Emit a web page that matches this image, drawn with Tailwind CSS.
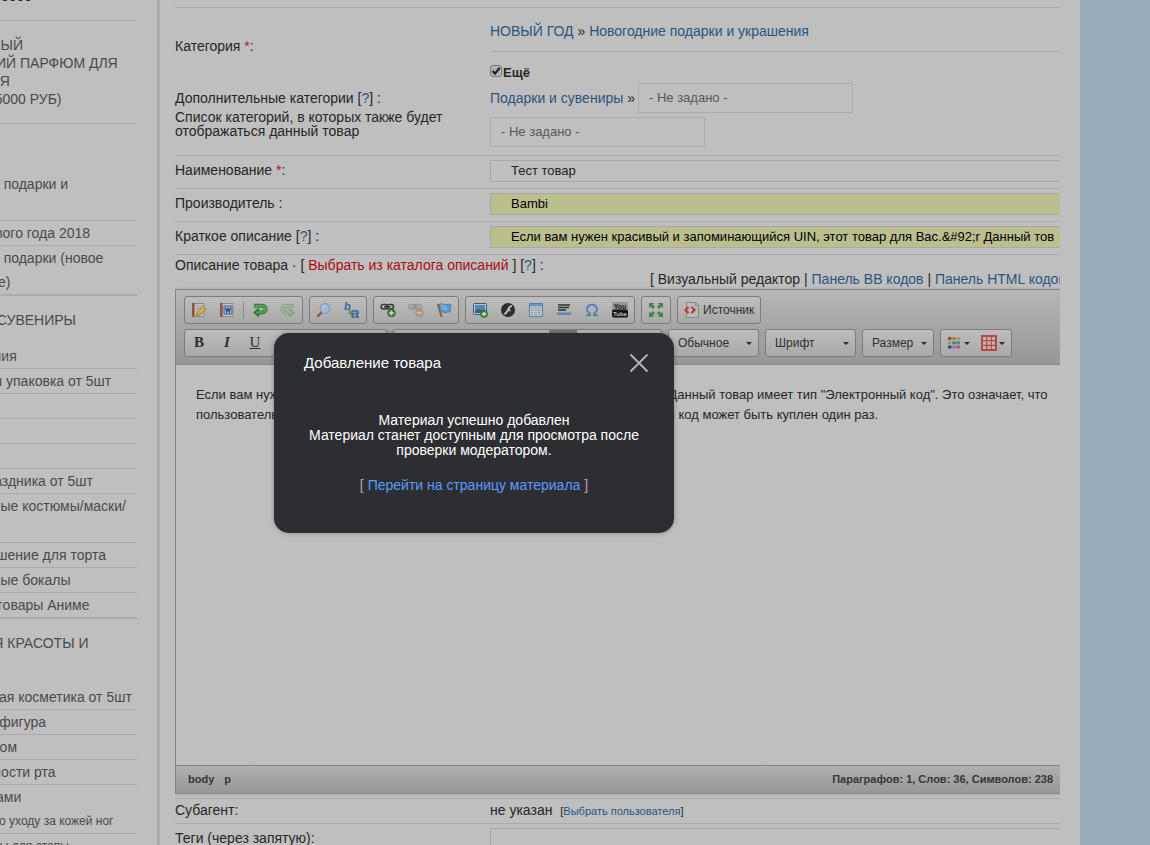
<!DOCTYPE html>
<html lang="ru">
  <head>
    <meta charset="UTF-8" />
    <meta name="viewport" content="width=device-width, initial-scale=1.0" />
    <title>Добавление товара</title>
    <script src="https://cdn.jsdelivr.net/npm/@tailwindcss/browser@4"></script>
  </head>
  <body class="h-screen overflow-hidden bg-[#99aebd] font-['Liberation_Sans',Arial,sans-serif] text-sm text-[#262626]">
    <div class="mr-[70px] flex h-full overflow-hidden bg-[#bfbfbf]">
      <!-- Left menu -->
      <aside class="w-[160px] shrink-0 overflow-hidden border-r-3 border-[#acacac] pr-5 text-[#4a4a4a]">
        <nav class="-mt-[13px] -ml-[88px] whitespace-nowrap">
          <h3 class="border-b border-[#acacac] pb-[15px] leading-[18px] font-bold text-[#232323]">ТОВАРЫ ОТ 5000</h3>
          <h3 class="border-b border-[#acacac] py-[15px] leading-[18px]">
            ПРЕМИАЛЬНЫЙ<br />ФРАНЦУЗСКИЙ ПАРФЮМ ДЛЯ<br />ДОМА И СЕБЯ<br />(МИНИМУМ 5000 РУБ)
          </h3>
          <h3 class="py-[15px] leading-[18px]">&nbsp;</h3>
          <ul class="ml-[11px] border-b-2 border-[#acacac] leading-6">
            <li class="border-b border-[#acacac]"><a href="#">Новогодние подарки и<br />&nbsp;</a></li>
            <li class="border-b border-[#acacac]"><a href="#">Символ Нового года 2018</a></li>
            <li><a href="#">Новогодние подарки (новое<br />поступление)</a></li>
          </ul>
          <h3 class="py-[15px] leading-[18px]">ПОДАРКИ И СУВЕНИРЫ</h3>
          <ul class="ml-[11px] border-b-2 border-[#acacac] leading-6">
            <li class="border-b border-[#acacac]"><a href="#">Поздравления</a></li>
            <li class="border-b border-[#acacac]"><a href="#">Подарочная упаковка от 5шт</a></li>
            <li class="border-b border-[#acacac]"><a href="#">Игрушки</a></li>
            <li class="border-b border-[#acacac]"><a href="#">Магниты</a></li>
            <li class="border-b border-[#acacac]"><a href="#">Свечи</a></li>
            <li class="border-b border-[#acacac]"><a href="#">Все для праздника от 5шт</a></li>
            <li class="border-b border-[#acacac]"><a href="#">Карнавальные костюмы/маски/<br />парики</a></li>
            <li class="border-b border-[#acacac]"><a href="#">Новое украшение для торта</a></li>
            <li class="border-b border-[#acacac]"><a href="#">Карнавальные бокалы</a></li>
            <li><a href="#">Сувениры, товары Аниме</a></li>
          </ul>
          <h3 class="py-[15px] leading-[18px]">ТОВАРЫ ДЛЯ КРАСОТЫ И<br />ЗДОРОВЬЯ</h3>
          <ul class="ml-[11px] leading-6">
            <li class="border-b border-[#acacac]"><a href="#">Декоративная косметика от 5шт</a></li>
            <li class="border-b border-[#acacac]"><a href="#">Идеальная фигура</a></li>
            <li class="border-b border-[#acacac]"><a href="#">Уход за лицом</a></li>
            <li class="border-b border-[#acacac]"><a href="#">Гигиена полости рта</a></li>
            <li><a href="#">Уход за ногами</a></li>
            <li class="border-b border-[#acacac] text-xs leading-6"><a href="#">Инструмент по уходу за кожей ног</a></li>
            <li class="text-xs leading-6"><a href="#">Эл. массажеры для стопы</a></li>
          </ul>
        </nav>
      </aside>

      <!-- Form -->
      <main class="mr-5 ml-[15px] min-w-0 flex-1 overflow-hidden pt-[7px]">
        <form>
          <div class="grid grid-cols-[315px_1fr] border-y border-[#acacac]">
            <div class="pt-[29px]">
              <p class="leading-[18px]">Категория <span class="text-[#b3101c]">*</span>:</p>
              <p class="mt-[34px] leading-[18px]">Дополнительные категории [<a href="#" class="text-[#2b547d]">?</a>] :</p>
              <p class="mt-[3px] w-[280px] leading-[14px]">Список категорий, в которых также будет отображаться данный товар</p>
            </div>
            <div class="pb-2">
              <p class="border-b border-[#acacac] pt-[14px] pb-[11px] leading-[18px]">
                <a href="#" class="text-[#2b547d]">НОВЫЙ ГОД</a> »
                <a href="#" class="text-[#2b547d]">Новогодние подарки и украшения</a>
              </p>
              <label class="relative mt-3 flex h-[18px] gap-px text-[13px] leading-[18px] font-bold">
                <input type="checkbox" checked class="mt-px size-3 appearance-none rounded-[3px] border border-[#777] bg-[#b4b4b4]" />
                <svg class="absolute top-px left-0 size-3" viewBox="0 0 12 12" fill="none" stroke="#222" stroke-width="2.2"><path d="M2.5 6 5 8.6 9.6 2.8" /></svg>
                Ещё
              </label>
              <div class="mt-px flex items-center gap-[3px]">
                <span><a href="#" class="text-[#2b547d]">Подарки и сувениры</a> »</span>
                <select aria-label="Подкатегория" class="h-[30px] w-[215px] appearance-none border border-[#acacac] px-[10px] text-[13px] text-[#585858]">
                  <option>- Не задано -</option>
                </select>
              </div>
              <select aria-label="Категория" class="mt-1 block h-[30px] w-[215px] appearance-none border border-[#acacac] px-[10px] text-[13px] text-[#585858]">
                <option>- Не задано -</option>
              </select>
            </div>
          </div>

          <div class="grid grid-cols-[315px_1fr] border-b border-[#acacac] pt-1 pb-[6px]">
            <label for="name" class="leading-5">Наименование <span class="text-[#b3101c]">*</span>:</label>
            <input id="name" type="text" value="Тест товар" class="h-[22px] w-full border border-r-0 border-[#a9a9a9] pb-[2px] pl-5 text-[13px] text-[#232323]" />
          </div>
          <div class="grid grid-cols-[315px_1fr] border-b border-[#acacac] pt-1 pb-[6px]">
            <label for="vendor" class="leading-5">Производитель :</label>
            <input id="vendor" type="text" value="Bambi" class="h-[22px] w-full border border-r-0 border-[#a9a9a9] bg-[#bbbf8d] pb-[2px] pl-5 text-[13px] text-black" />
          </div>
          <div class="grid grid-cols-[315px_1fr] border-b border-[#acacac] pt-1 pb-[6px]">
            <label for="brief" class="leading-5">Краткое описание [<a href="#" class="text-[#2b547d]">?</a>] :</label>
            <input
              id="brief"
              type="text"
              value="Если вам нужен красивый и запоминающийся UIN, этот товар для Вас.&amp;#92;r Данный тов"
              class="h-[22px] w-full border border-r-0 border-[#a9a9a9] bg-[#bbbf8d] pb-[2px] pl-5 text-[13px] text-black"
            />
          </div>

          <div class="flex h-[34px] leading-5 whitespace-nowrap">
            <p class="w-[475px] shrink-0">
              Описание товара · [ <a href="#" class="text-[#a80c18]">Выбрать из каталога описаний</a> ] [<a href="#" class="text-[#2b547d]">?</a>] :
            </p>
            <p class="self-end">
              [ Визуальный редактор | <a href="#" class="text-[#2b547d]">Панель BB кодов</a> |
              <a href="#" class="text-[#2b547d]">Панель HTML кодов</a> ]
            </p>
          </div>

          <!-- Editor -->
          <div class="border border-r-0 border-[#858585] shadow-[0_0_3px_rgba(0,0,0,0.15)]">
            <div class="flex flex-col gap-[5px] border-b border-[#858585] bg-linear-to-b from-[#b6b6b6] to-[#979797] pt-[6px] pb-[7px] pl-2 text-xs text-[#303030]">
              <div class="flex gap-[6px]">
                <div class="flex h-7 items-center rounded-[3px] border border-[#7c7c7c] bg-linear-to-b from-[#bdbdbd] to-[#a9a9a9]">
                  <button type="button" aria-label="Шаблоны" class="px-[6px]">
                    <svg class="size-4" viewBox="0 0 16 16"><path d="M3 1.500h10v13H3z" fill="#c3c3c3" stroke="#8c8c8c" /><path d="M5 4h7M5 6.500h7M5 9h4M5 11.500h4" stroke="#8e949c" /><path d="M1 1h2.500v14H1z" fill="#95553c" /><path d="m5.500 14 .8-4L12 4.800l3 2.400-5.500 5.600z" fill="#d9a236" stroke="#92681e" stroke-width=".7" /><path d="m7 11 5.500-5" stroke="#ecd08a" /></svg>
                  </button>
                  <button type="button" aria-label="Вставить из Word" class="px-[6px]">
                    <svg class="size-4" viewBox="0 0 16 16"><path d="M3 1.500h11v13H3z" fill="#c3c3c3" stroke="#8c8c8c" /><path d="M1 1h2.500v14H1z" fill="#95553c" /><path d="M5 4h8v8H5z" fill="#b1bccd" stroke="#416398" /><path d="m6.500 5.500 1.200 4.500L9 6.500l1.300 3.500 1.200-4.500" fill="none" stroke="#2c4d8b" stroke-width="1.300" /></svg>
                  </button>
                  <span class="mx-[2px] h-[18px] w-px bg-[#8c8c8c]"></span>
                  <button type="button" aria-label="Отменить" class="px-[6px]">
                    <svg class="size-4" viewBox="0 0 16 16"><path d="M2 3.800h8.300a3.200 3.200 0 0 1 0 6.600H6" fill="none" stroke="#2f7532" stroke-width="4" /><path d="M7 5.500v10L1 10.400z" fill="#2f7532" /><path d="M2.500 3.800h7.800a3.200 3.200 0 0 1 0 6.600H4" fill="none" stroke="#56a351" stroke-width="2.200" /></svg>
                  </button>
                  <button type="button" aria-label="Повторить" class="px-[6px] opacity-35">
                    <svg class="size-4 -scale-x-100" viewBox="0 0 16 16"><path d="M2 3.800h8.300a3.200 3.200 0 0 1 0 6.600H6" fill="none" stroke="#397d3c" stroke-width="4" /><path d="M7 5.500v10L1 10.400z" fill="#397d3c" /><path d="M2.500 3.800h7.800a3.200 3.200 0 0 1 0 6.600H4" fill="none" stroke="#75b172" stroke-width="2.200" /></svg>
                  </button>
                </div>
                <div class="flex h-7 items-center rounded-[3px] border border-[#7c7c7c] bg-linear-to-b from-[#bdbdbd] to-[#a9a9a9]">
                  <button type="button" aria-label="Найти" class="px-[6px]">
                    <svg class="size-4" viewBox="0 0 16 16"><path d="m6 10-4 4" stroke="#90562c" stroke-width="2.400" stroke-linecap="round" /><circle cx="9" cy="6.500" r="4.800" fill="#a1bad8" stroke="#7f9cc4" stroke-width="1.200" /><path d="M6.500 6a2.500 2.500 0 0 1 3-2" fill="none" stroke="#c5d3e3" stroke-width="1.300" /></svg>
                  </button>
                  <button type="button" aria-label="Заменить" class="px-[6px]">
                    <svg class="size-4 overflow-visible" viewBox="0 0 16 16" font-family="Liberation Sans, sans-serif" font-weight="bold" font-style="italic" fill="#2f67b0"><text x="0" y="8" font-size="11">b</text><text x="7" y="16" font-size="15">a</text><path d="m4 7 4 4M8.500 7.500v4h-4" fill="none" stroke="#459044" stroke-width="1.500" /></svg>
                  </button>
                </div>
                <div class="flex h-7 items-center rounded-[3px] border border-[#7c7c7c] bg-linear-to-b from-[#bdbdbd] to-[#a9a9a9]">
                  <button type="button" aria-label="Ссылка" class="px-[6px]">
                    <svg class="size-4" viewBox="0 0 16 16"><g fill="none" stroke="#383838" stroke-width="1.500"><rect x="1" y="2.500" width="6.500" height="4.500" rx="2.200" /><rect x="7" y="2.500" width="6.500" height="4.500" rx="2.200" /><path d="M4 4.800h6.500" /></g><circle cx="11.500" cy="11" r="3.800" fill="#40833a" stroke="#2b6528" /><path d="M9 11h5M11.500 8.500v5" stroke="#c4d8c0" stroke-width="1.400" /></svg>
                  </button>
                  <button type="button" aria-label="Убрать ссылку" class="px-[6px] opacity-35">
                    <svg class="size-4" viewBox="0 0 16 16"><g fill="none" stroke="#555" stroke-width="1.500"><rect x="1" y="2.500" width="6.500" height="4.500" rx="2.200" /><rect x="7" y="2.500" width="6.500" height="4.500" rx="2.200" /><path d="M4 4.800h6.500" /></g><circle cx="11.500" cy="11" r="3.800" fill="#c56038" stroke="#aa4d28" /><path d="M9 11h5" stroke="#eee" stroke-width="1.400" /></svg>
                  </button>
                  <button type="button" aria-label="Якорь" class="px-[6px]">
                    <svg class="size-4" viewBox="0 0 16 16"><path d="m2 2 3.500 13" stroke="#9a5f2e" stroke-width="2" /><path d="M3 2.500c3-2 4.500.8 7 .3s3-.8 5-.3l-1 7.500c-2.500-.8-3 1-5 .8S6 9 4.800 10z" fill="#5b9dd0" stroke="#3c76ac" stroke-width=".8" /><path d="M5 4c2-.8 3 .8 5 .6M6 6.500c2-.6 3 .6 5 .4" fill="none" stroke="#9cc3e0" /></svg>
                  </button>
                </div>
                <div class="flex h-7 items-center rounded-[3px] border border-[#7c7c7c] bg-linear-to-b from-[#bdbdbd] to-[#a9a9a9]">
                  <button type="button" aria-label="Изображение" class="px-[6px]">
                    <svg class="size-4" viewBox="0 0 16 16"><rect x="1.500" y="1.500" width="13" height="11" rx=".8" fill="#bbc4cb" stroke="#355d86" /><path d="M3 3h10v5H3z" fill="#5289bb" /><path d="M3 8.500c4-3 6 .5 10-1V11H3z" fill="#3c6278" /><circle cx="12" cy="12" r="3.500" fill="#4a8a42" stroke="#33682e" stroke-width=".8" /><path d="M10 12h4M12 10v4" stroke="#d0ddcc" stroke-width="1.300" /></svg>
                  </button>
                  <button type="button" aria-label="Flash" class="px-[6px]">
                    <svg class="size-4" viewBox="0 0 16 16"><circle cx="8" cy="8" r="7" fill="#2e2e2e" /><path d="M12 3.800C7.500 4 8.500 11 4.300 12M7.500 8.300h3" fill="none" stroke="#c2c2c2" stroke-width="1.800" /></svg>
                  </button>
                  <button type="button" aria-label="Таблица" class="px-[6px]">
                    <svg class="size-4" viewBox="0 0 16 16"><rect x="1.500" y="1.500" width="13" height="13" fill="#c1c5c9" stroke="#577fb0" /><path d="M2 2h12v2.500H2z" fill="#6d98c6" /><path d="M3 6.500h10M3 8.500h10M3 10.500h10M3 12.500h10" stroke="#8c9c8b" stroke-dasharray="2.500 1" /><path d="M5.700 5v9" stroke="#c1c5c9" /></svg>
                  </button>
                  <button type="button" aria-label="Горизонтальная линия" class="px-[6px]">
                    <svg class="size-4" viewBox="0 0 16 16"><path d="M2 3h12M2 5.500h11M2 8h8" stroke="#2d2d2d" stroke-width="1.300" /><path d="M1 10.500h14v2.500H1z" fill="#6286b5" /></svg>
                  </button>
                  <button type="button" aria-label="Специальный символ" class="px-[6px]">
                    <svg class="size-4" viewBox="0 0 16 16"><path d="M2 13.300h4v-1.800C1 8.500 2.800 2.700 8 2.700s7 5.800 2 8.800v1.800h4" fill="none" stroke="#5380b8" stroke-width="1.900" /></svg>
                  </button>
                  <button type="button" aria-label="Видео YouTube" class="px-[6px]">
                    <svg class="size-4" viewBox="0 0 16 16" font-family="Liberation Sans, sans-serif" font-weight="bold" text-anchor="middle"><rect width="16" height="16" rx="1.500" fill="#969696" /><rect y="7.500" width="16" height="8" rx="2" fill="#151515" /><text x="8" y="6.500" font-size="7" fill="#151515">You</text><text x="8" y="14" font-size="6" fill="#bfbfbf">Tube</text></svg>
                  </button>
                </div>
                <div class="flex h-7 items-center rounded-[3px] border border-[#7c7c7c] bg-linear-to-b from-[#bdbdbd] to-[#a9a9a9]">
                  <button type="button" aria-label="Развернуть" class="px-[6px]">
                    <svg class="size-4" viewBox="0 0 16 16" fill="#438546"><path d="M1 1h5L4.800 2.600 7 5 5 7 2.600 4.800 1 6zM15 1v5l-1.600-1.200L11 7 9 5l2.200-2.400L10 1zM1 15v-5l1.600 1.200L5 9l2 2-2.200 2.400L6 15zM15 15h-5l1.200-1.600L9 11l2-2 2.400 2.200L15 10z" /></svg>
                  </button>
                </div>
                <button type="button" class="flex h-7 w-[84px] items-center gap-[3px] rounded-[3px] border border-[#7c7c7c] bg-linear-to-b from-[#bdbdbd] to-[#a9a9a9] pl-[6px]">
                  <svg class="size-4 shrink-0" viewBox="0 0 16 16"><path d="M2.500.5h9l3 3v12h-12z" fill="#bababa" stroke="#888" /><path d="M11.500.5v3h3" fill="none" stroke="#888" /><path d="M4.500 5 1.500 8l3 3M7.500 5l3 3-3 3" fill="none" stroke="#b03a34" stroke-width="2.200" /></svg>
                  Источник
                </button>
              </div>

              <div class="flex gap-[6px]">
                <div class="flex h-7 w-[203px] items-center rounded-[3px] border border-[#7c7c7c] bg-linear-to-b from-[#bdbdbd] to-[#a9a9a9] font-['Liberation_Serif',serif] text-[15px]">
                  <button type="button" aria-label="Полужирный" class="w-7 font-bold">B</button>
                  <button type="button" aria-label="Курсив" class="w-7 font-bold italic">I</button>
                  <button type="button" aria-label="Подчеркнутый" class="w-7 underline">U</button>
                </div>
                <div class="flex h-7 w-[269px] rounded-[3px] border border-[#7c7c7c] bg-linear-to-b from-[#bdbdbd] to-[#a9a9a9] pl-[155px]">
                  <button type="button" aria-label="По ширине" class="w-7 bg-[#7b7b7b]"></button>
                </div>
                <button type="button" class="flex h-7 w-[91px] items-center justify-between rounded-[3px] border border-[#7c7c7c] bg-linear-to-b from-[#bdbdbd] to-[#a9a9a9] pr-[6px] pl-[9px]">
                  Обычное
                  <svg class="h-[3px] w-[6px]" viewBox="0 0 6 3"><path d="M0 0h6L3 3z" fill="#2b2b2b" /></svg>
                </button>
                <button type="button" class="flex h-7 w-[91px] items-center justify-between rounded-[3px] border border-[#7c7c7c] bg-linear-to-b from-[#bdbdbd] to-[#a9a9a9] pr-[6px] pl-[9px]">
                  Шрифт
                  <svg class="h-[3px] w-[6px]" viewBox="0 0 6 3"><path d="M0 0h6L3 3z" fill="#2b2b2b" /></svg>
                </button>
                <button type="button" class="flex h-7 w-[72px] items-center justify-between rounded-[3px] border border-[#7c7c7c] bg-linear-to-b from-[#bdbdbd] to-[#a9a9a9] pr-[6px] pl-[9px]">
                  Размер
                  <svg class="h-[3px] w-[6px]" viewBox="0 0 6 3"><path d="M0 0h6L3 3z" fill="#2b2b2b" /></svg>
                </button>
                <div class="flex h-7 w-[72px] items-center rounded-[3px] border border-[#7c7c7c] bg-linear-to-b from-[#bdbdbd] to-[#a9a9a9]">
                  <button type="button" aria-label="Цвет текста" class="flex w-[35px] items-center gap-[2px] pl-[5px]">
                    <svg class="size-4" viewBox="0 0 16 16"><path d="M2 2h3.500v3H2z" fill="#a94442" /><path d="M6.300 2h3.500v3H6.300z" fill="#b9764c" /><path d="M10.500 2H14v3h-3.500z" fill="#b29b45" /><path d="M2 6.300h3.500v3H2z" fill="#86a670" /><path d="M6.300 6.300h3.500v3H6.300z" fill="#3f9148" /><path d="M10.500 6.300H14v3h-3.500z" fill="#4181b4" /><path d="M2 10.500h3.500v3H2z" fill="#2f4b80" /><path d="M6.300 10.500h3.500v3H6.300z" fill="#8b74ad" /><path d="M10.500 10.500H14v3h-3.500z" fill="#b45286" /></svg>
                    <svg class="h-[3px] w-[6px]" viewBox="0 0 6 3"><path d="M0 0h6L3 3z" fill="#2b2b2b" /></svg>
                  </button>
                  <button type="button" aria-label="Таблица" class="flex w-[35px] items-center gap-[2px] pl-[5px]">
                    <svg class="size-4" viewBox="0 0 16 16"><path d="M1 1h14v14H1z" fill="#c0b2b2" stroke="#b34b49" stroke-width="2" /><path d="M5.700 1v14M10.300 1v14M1 5.700h14M1 10.300h14" stroke="#b34b49" stroke-width="1.200" /></svg>
                    <svg class="h-[3px] w-[6px]" viewBox="0 0 6 3"><path d="M0 0h6L3 3z" fill="#2b2b2b" /></svg>
                  </button>
                </div>
              </div>
            </div>
            <div contenteditable="true" aria-label="Описание товара" class="h-[400px] px-5 pt-5 text-[13px] leading-5 whitespace-nowrap">
              <p>
                Если вам нужен красивый и запоминающийся UIN, этот товар для Вас.&amp;#92;r Данный товар имеет тип "Электронный код". Это означает, что<br />
                пользователь после оплаты товара получает персональный код доступа. Один код может быть куплен один раз.
              </p>
            </div>
            <div class="flex h-7 items-center justify-between border-t border-[#858585] bg-linear-to-b from-[#b1b1b1] to-[#979797] pr-[7px] pl-3 text-[11px] font-bold text-[#363636]">
              <span class="flex gap-[10px]"><span>body</span><span>p</span></span>
              <span>Параграфов: 1, Слов: 36, Символов: 238</span>
            </div>
          </div>

          <div class="mt-1 grid grid-cols-[315px_1fr] border-y border-[#acacac] leading-[23px]">
            <span>Субагент:</span>
            <p>не указан <span class="ml-1 text-[11px]">[<a href="#" class="text-[#2b547d]">Выбрать пользователя</a>]</span></p>
          </div>
          <div class="grid grid-cols-[315px_1fr] pt-1">
            <label for="tags" class="leading-5">Теги (через запятую):</label>
            <input id="tags" type="text" class="h-[22px] w-full border border-r-0 border-[#a9a9a9] pl-5 text-[13px]" />
          </div>
        </form>
      </main>
    </div>

    <!-- Result window -->
    <div role="dialog" aria-labelledby="dialogTitle" class="absolute top-[333px] left-[274px] h-[200px] w-[400px] rounded-[15px] bg-[#2d2e32] text-white shadow-[0_0_5px_rgba(0,0,0,0.3)]">
      <div class="flex items-center justify-between pt-5 pr-[25px] pl-[30px]">
        <h2 id="dialogTitle" class="text-[15px] leading-5">Добавление товара</h2>
        <button type="button" aria-label="Закрыть">
          <svg class="size-5" viewBox="0 0 20 20" fill="none" stroke="#b5b6b8" stroke-width="1.800"><path d="m1.500 1.500 17 17M18.500 1.500l-17 17" /></svg>
        </button>
      </div>
      <div class="px-5 pt-10 text-center leading-[15px]">
        <p>Материал успешно добавлен<br />Материал станет доступным для просмотра после проверки модератором.</p>
        <p class="mt-5 text-[#a9aaac]">[ <a href="#" class="text-[#5b9bff]">Перейти на страницу материала</a> ]</p>
      </div>
    </div>
  </body>
</html>
